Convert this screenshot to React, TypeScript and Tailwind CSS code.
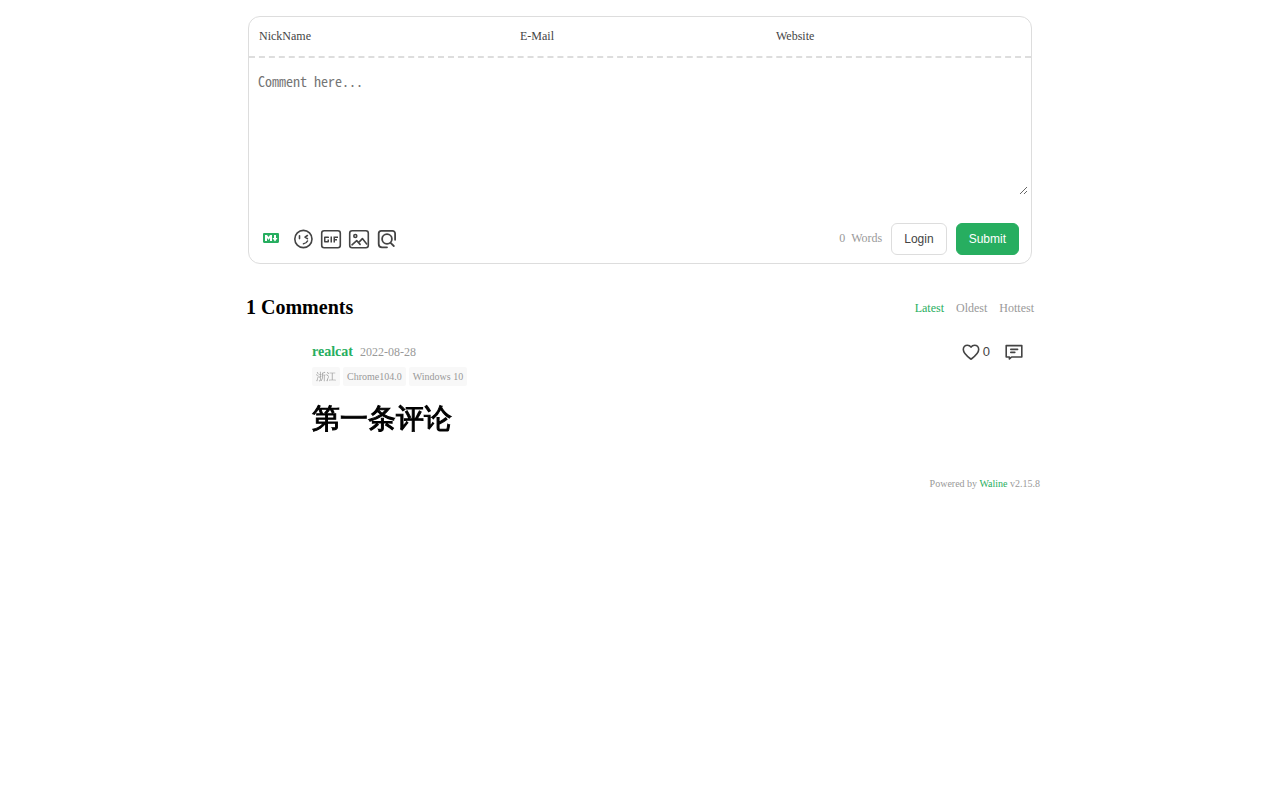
import { useState } from "react";
import { MdGif } from "react-icons/md";

const fields = [
  { id: "nick", label: "NickName", type: "text" },
  { id: "mail", label: "E-Mail", type: "email" },
  { id: "link", label: "Website", type: "url" },
];

const sorts = ["Latest", "Oldest", "Hottest"];

function MarkdownIcon() {
  return (
    <svg viewBox="0 0 16 16" className="h-4 w-4" fill="currentColor" aria-hidden>
      <path d="M14.85 3H1.15C.52 3 0 3.52 0 4.15v7.69C0 12.48.52 13 1.15 13h13.69c.64 0 1.15-.52 1.15-1.15v-7.7C16 3.52 15.48 3 14.85 3zM9 11H7V8L5.5 9.92 4 8v3H2V5h2l1.5 2L7 5h2v6zm2.99.5L9.5 8H11V5h2v3h1.5l-2.51 3.5z" />
    </svg>
  );
}

function LineIcon({ children }: { children: React.ReactNode }) {
  return (
    <svg
      viewBox="0 0 24 24"
      className="h-6 w-6"
      fill="none"
      stroke="currentColor"
      strokeWidth="1.6"
      strokeLinecap="round"
      strokeLinejoin="round"
      aria-hidden
    >
      {children}
    </svg>
  );
}

function EmojiIcon() {
  return (
    <LineIcon>
      <circle cx="11.4" cy="12" r="8.6" />
      <path d="M7.5 8.8v2.8M15.4 8.5 13 10.1l2.4 1.6M15.5 14c-.9 1.7-2.3 2.6-4 2.8" />
    </LineIcon>
  );
}

function GifIcon() {
  return (
    <LineIcon>
      <rect x="1.7" y="3.7" width="18.6" height="17" rx="2.4" />
      <MdGif x="-1" y="0.4" size={24} stroke="none" />
    </LineIcon>
  );
}

function ImageIcon() {
  return (
    <LineIcon>
      <rect x="1.7" y="3.7" width="18.6" height="17" rx="2.4" />
      <circle cx="7.3" cy="9" r="1.5" />
      <path d="m4 17.8 4.7-4.2 3.4 3.8M10.8 15.4l3.6-3.8 4.3 5.4" />
    </LineIcon>
  );
}

function PreviewIcon() {
  return (
    <LineIcon>
      <g strokeWidth="1.8">
        <path d="M11 20.300H6A3.400 3.400 0 0 1 2.700 16.900V6.400a2.600 2.600 0 0 1 2.600-2.600h11.200a2.600 2.600 0 0 1 2.600 2.600v6.400" />
        <circle cx="11" cy="12" r="4.900" />
        <path d="m14.600 15.800 3.200 3.200" />
      </g>
    </LineIcon>
  );
}

function CommentBox() {
  const [comment, setComment] = useState("");

  return (
    <form
      onSubmit={(e) => e.preventDefault()}
      className="mx-2 rounded-xl border border-[#dddddd] text-[#444444]"
    >
      <div className="grid grid-cols-[261fr_256fr_265fr] border-b-2 border-dashed border-[#dddddd]">
        {fields.map((f) => (
          <div key={f.id} className="flex items-center">
            <label htmlFor={f.id} className="px-2.5 py-3 text-xs leading-[15px]">
              {f.label}
            </label>
            <input
              id={f.id}
              type={f.type}
              className="w-0 flex-1 p-2 text-xs leading-4 outline-none"
            />
          </div>
        ))}
      </div>

      <div className="px-[3px] pt-[11px]">
        <textarea
          value={comment}
          onChange={(e) => setComment(e.target.value)}
          placeholder="Comment here..."
          aria-label="Comment"
          className="block h-[126px] w-full resize-y px-1.5 py-0.5 font-['Noto_Sans_Mono_CJK_SC','Noto_Sans_CJK_SC',monospace] text-sm outline-none placeholder:text-[#757575]"
        />
      </div>

      <div className="mx-3 mt-7 mb-2 flex items-center">
        <div className="flex items-center gap-1">
          <a
            href="#markdown"
            aria-label="Markdown guide"
            className="mr-[9px] ml-0.5 pb-0.5 text-[#27ae60]"
          >
            <MarkdownIcon />
          </a>
          <button type="button" aria-label="Emoji">
            <EmojiIcon />
          </button>
          <button type="button" aria-label="GIF">
            <GifIcon />
          </button>
          <button type="button" aria-label="Upload image">
            <ImageIcon />
          </button>
          <button type="button" aria-label="Preview">
            <PreviewIcon />
          </button>
        </div>
        <div className="ml-auto flex items-center gap-[9px] font-['Liberation_Sans',sans-serif] text-xs">
          <span className="flex gap-1.5 pb-0.5 font-['Liberation_Serif',serif] text-[#999999]">
            <span>{comment.length}</span>
            <span>Words</span>
          </span>
          <button
            type="button"
            className="h-8 rounded-md border border-[#dddddd] px-3"
          >
            Login
          </button>
          <button
            type="submit"
            className="h-8 rounded-md border border-[#27ae60] bg-[#27ae60] px-3 text-white"
          >
            Submit
          </button>
        </div>
      </div>
    </form>
  );
}

function Comment() {
  return (
    <article className="mt-[18px] pr-3.5 pl-[72px]">
      <div className="flex h-6 items-center">
        <a href="#realcat" className="text-sm font-bold text-[#27ae60]">
          realcat
        </a>
        <time className="ml-[7px] text-xs text-[#999999]">2022-08-28</time>
        <div className="ml-auto flex items-center gap-3 text-[#444444]">
          <button
            type="button"
            aria-label="Like"
            className="flex items-center font-['Liberation_Sans',sans-serif] text-[13px]"
          >
            <LineIcon>
              <path d="M12 19.2c-3-2.300-7.700-5.600-7.700-9.700 0-2.500 1.800-4.300 4.100-4.300 1.500 0 2.800.7 3.600 2 .8-1.300 2.100-2 3.600-2 2.300 0 4.100 1.800 4.100 4.300 0 4.100-4.700 7.400-7.700 9.700z" />
            </LineIcon>
            0
          </button>
          <button type="button" aria-label="Reply">
            <LineIcon>
              <path d="M4.200 5.600h15.600v11.400H9.600l-2.200 2v-2H4.200zM8.800 9.400h6.800M8.800 12.400h4" />
            </LineIcon>
          </button>
        </div>
      </div>
      <div className="mt-[3px] flex gap-[3px] text-[10px] leading-[15px] text-[#999999]">
        {["浙江", "Chrome104.0", "Windows 10"].map((m) => (
          <span key={m} className="rounded-xs bg-[#f8f8f8] px-1 py-0.5">
            {m}
          </span>
        ))}
      </div>
      {/* the fallback face has no bold cut, so thicken it with a stroke */}
      <h1 className="mt-3 text-[28px] leading-[42px] font-bold text-black [-webkit-text-stroke:1px_black]">
        第一条评论
      </h1>
    </article>
  );
}

export default function App() {
  const [sort, setSort] = useState("Latest");

  return (
    <main className="mx-auto max-w-[800px] pt-4 font-['Liberation_Serif','WenQuanYi_Zen_Hei','Noto_Sans_CJK_SC',serif]">
      <CommentBox />

      <div className="mt-7 flex items-center justify-between px-1.5">
        <h3 className="text-xl leading-[30px] font-bold text-black">1 Comments</h3>
        <ul className="flex gap-3 pt-0.5 text-xs">
          {sorts.map((s) => (
            <li key={s}>
              <button
                type="button"
                onClick={() => setSort(s)}
                className={s === sort ? "text-[#27ae60]" : "text-[#999999]"}
              >
                {s}
              </button>
            </li>
          ))}
        </ul>
      </div>

      <Comment />

      <footer className="mt-9 text-right text-[10px] leading-4 text-[#999999]">
        Powered by{" "}
        <a href="#waline" className="text-[#27ae60]">
          Waline
        </a>{" "}
        v2.15.8
      </footer>
    </main>
  );
}
